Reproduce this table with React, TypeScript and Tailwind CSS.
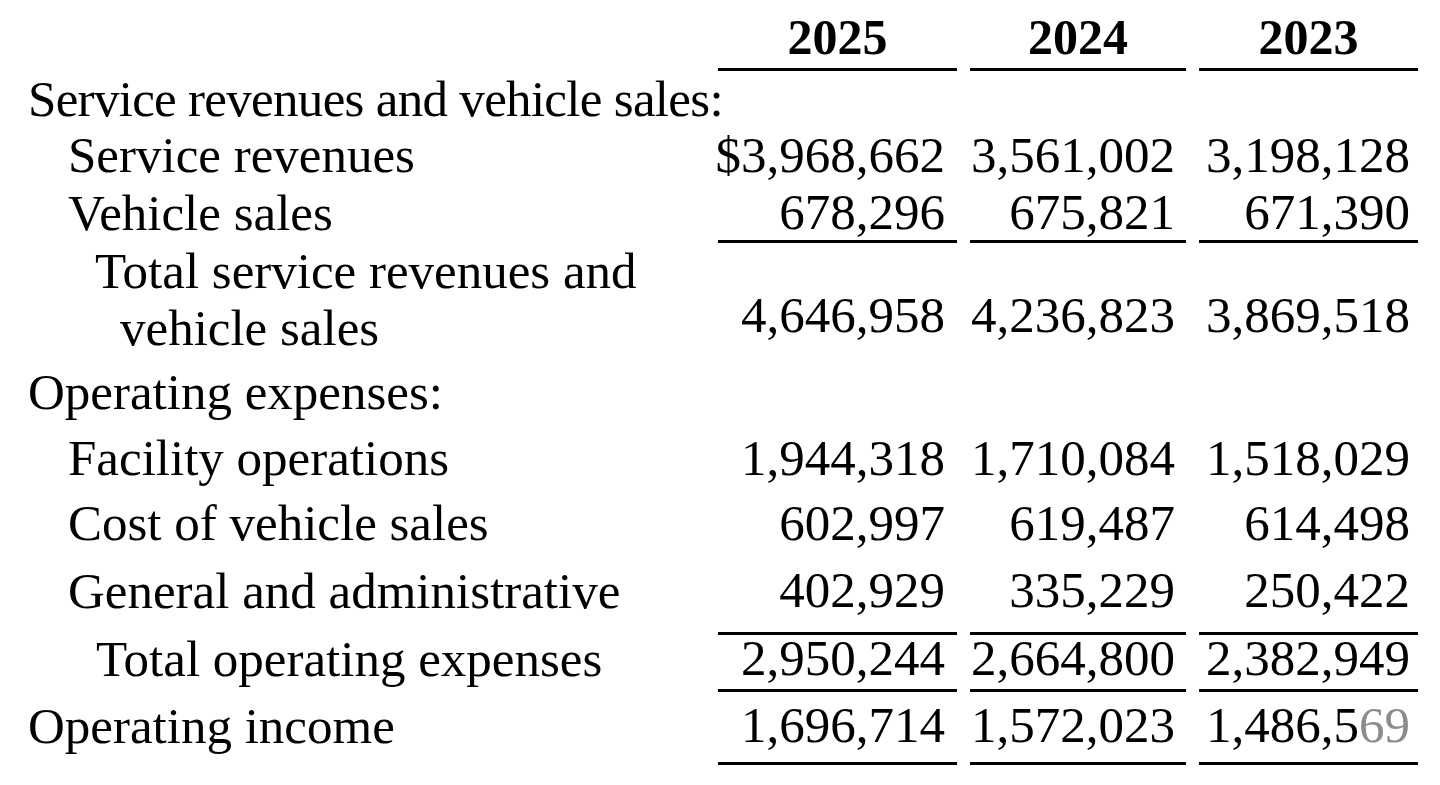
import React from "react";

type Line = {
    label: string[];
    indent: string[];
    vals?: [React.ReactNode, React.ReactNode, React.ReactNode];
    h: string;
    line?: boolean;
    pb?: string;
    tight?: boolean;
};

const lines: Line[] = [
    { label: ["Service revenues and vehicle sales:"], indent: ["pl-[28px]"], h: "h-[56px]", tight: true },
    { label: ["Service revenues"], indent: ["pl-[68px]"], vals: ["$3,968,662", "3,561,002", "3,198,128"], h: "h-[57px]" },
    { label: ["Vehicle sales"], indent: ["pl-[68px]"], vals: ["678,296", "675,821", "671,390"], h: "h-[59px]", line: true },
    { label: ["Total service revenues and", "vehicle sales"], indent: ["pl-[95px]", "pl-[120px]"], vals: ["4,646,958", "4,236,823", "3,869,518"], h: "h-[114px]" },
    { label: ["Operating expenses:"], indent: ["pl-[28px]"], h: "h-[70px]" },
    { label: ["Facility operations"], indent: ["pl-[68px]"], vals: ["1,944,318", "1,710,084", "1,518,029"], h: "h-[63px]" },
    { label: ["Cost of vehicle sales"], indent: ["pl-[68px]"], vals: ["602,997", "619,487", "614,498"], h: "h-[66px]" },
    { label: ["General and administrative"], indent: ["pl-[68px]"], vals: ["402,929", "335,229", "250,422"], h: "h-[79px]", line: true, pb: "pb-[8px]" },
    { label: ["Total operating expenses"], indent: ["pl-[96px]"], vals: ["2,950,244", "2,664,800", "2,382,949"], h: "h-[57px]", line: true, pb: "pb-[8px]" },
    {
        label: ["Operating income"], indent: ["pl-[28px]"],
        vals: ["1,696,714", "1,572,023", <>1,486,5<span className="text-[#8c8c8c]">69</span></>],
        h: "h-[73px]", line: true, pb: "pb-[4px]",
    },
];

const colW = ["w-[239px] pr-[12px]", "w-[216px] pr-[11px]", "w-[219px] pr-[8px]"];

export default function App() {
    return (
        <div className="w-[1440px] h-[785px] bg-white text-black font-['Liberation_Serif',serif] overflow-hidden">
            {/* header */}
            <div className="flex h-[71px]">
                <div className="w-[718px]"></div>
                {["2025", "2024", "2023"].map((y, i) => (
                    <div key={y} className={`${["w-[239px]", "w-[216px]", "w-[219px]"][i]} ${i > 0 ? "ml-[13px]" : ""} border-b-[3px] border-black flex items-center justify-center pt-[6px] text-[50px] font-bold leading-none`}>
                        {y}
                    </div>
                ))}
            </div>

            {lines.map((ln, idx) => (
                <div key={idx} className={`flex ${ln.h}`}>
                    <div className={`w-[718px] flex flex-col justify-center ${ln.pb ?? ""}`}>
                        {ln.label.map((t, j) => (
                            <div key={j} className={`${ln.indent[j]} text-[51px] leading-none ${ln.tight ? "tracking-[-0.7px]" : ""} ${ln.label.length > 1 ? "h-[57px] flex items-center" : ""} whitespace-nowrap`}>
                                {t}
                            </div>
                        ))}
                    </div>
                    {[0, 1, 2].map((c) => (
                        <div
                            key={c}
                            className={`${colW[c]} ${c > 0 ? "ml-[13px]" : ""} flex justify-end ${ln.label.length > 1 ? "items-end pb-[16px]" : "items-center"} ${ln.pb ?? ""} ${ln.line ? "border-b-[3px] border-black" : ""} text-[51px] leading-none whitespace-nowrap`}
                        >
                            {ln.vals ? ln.vals[c] : null}
                        </div>
                    ))}
                </div>
            ))}
        </div>
    );
}
